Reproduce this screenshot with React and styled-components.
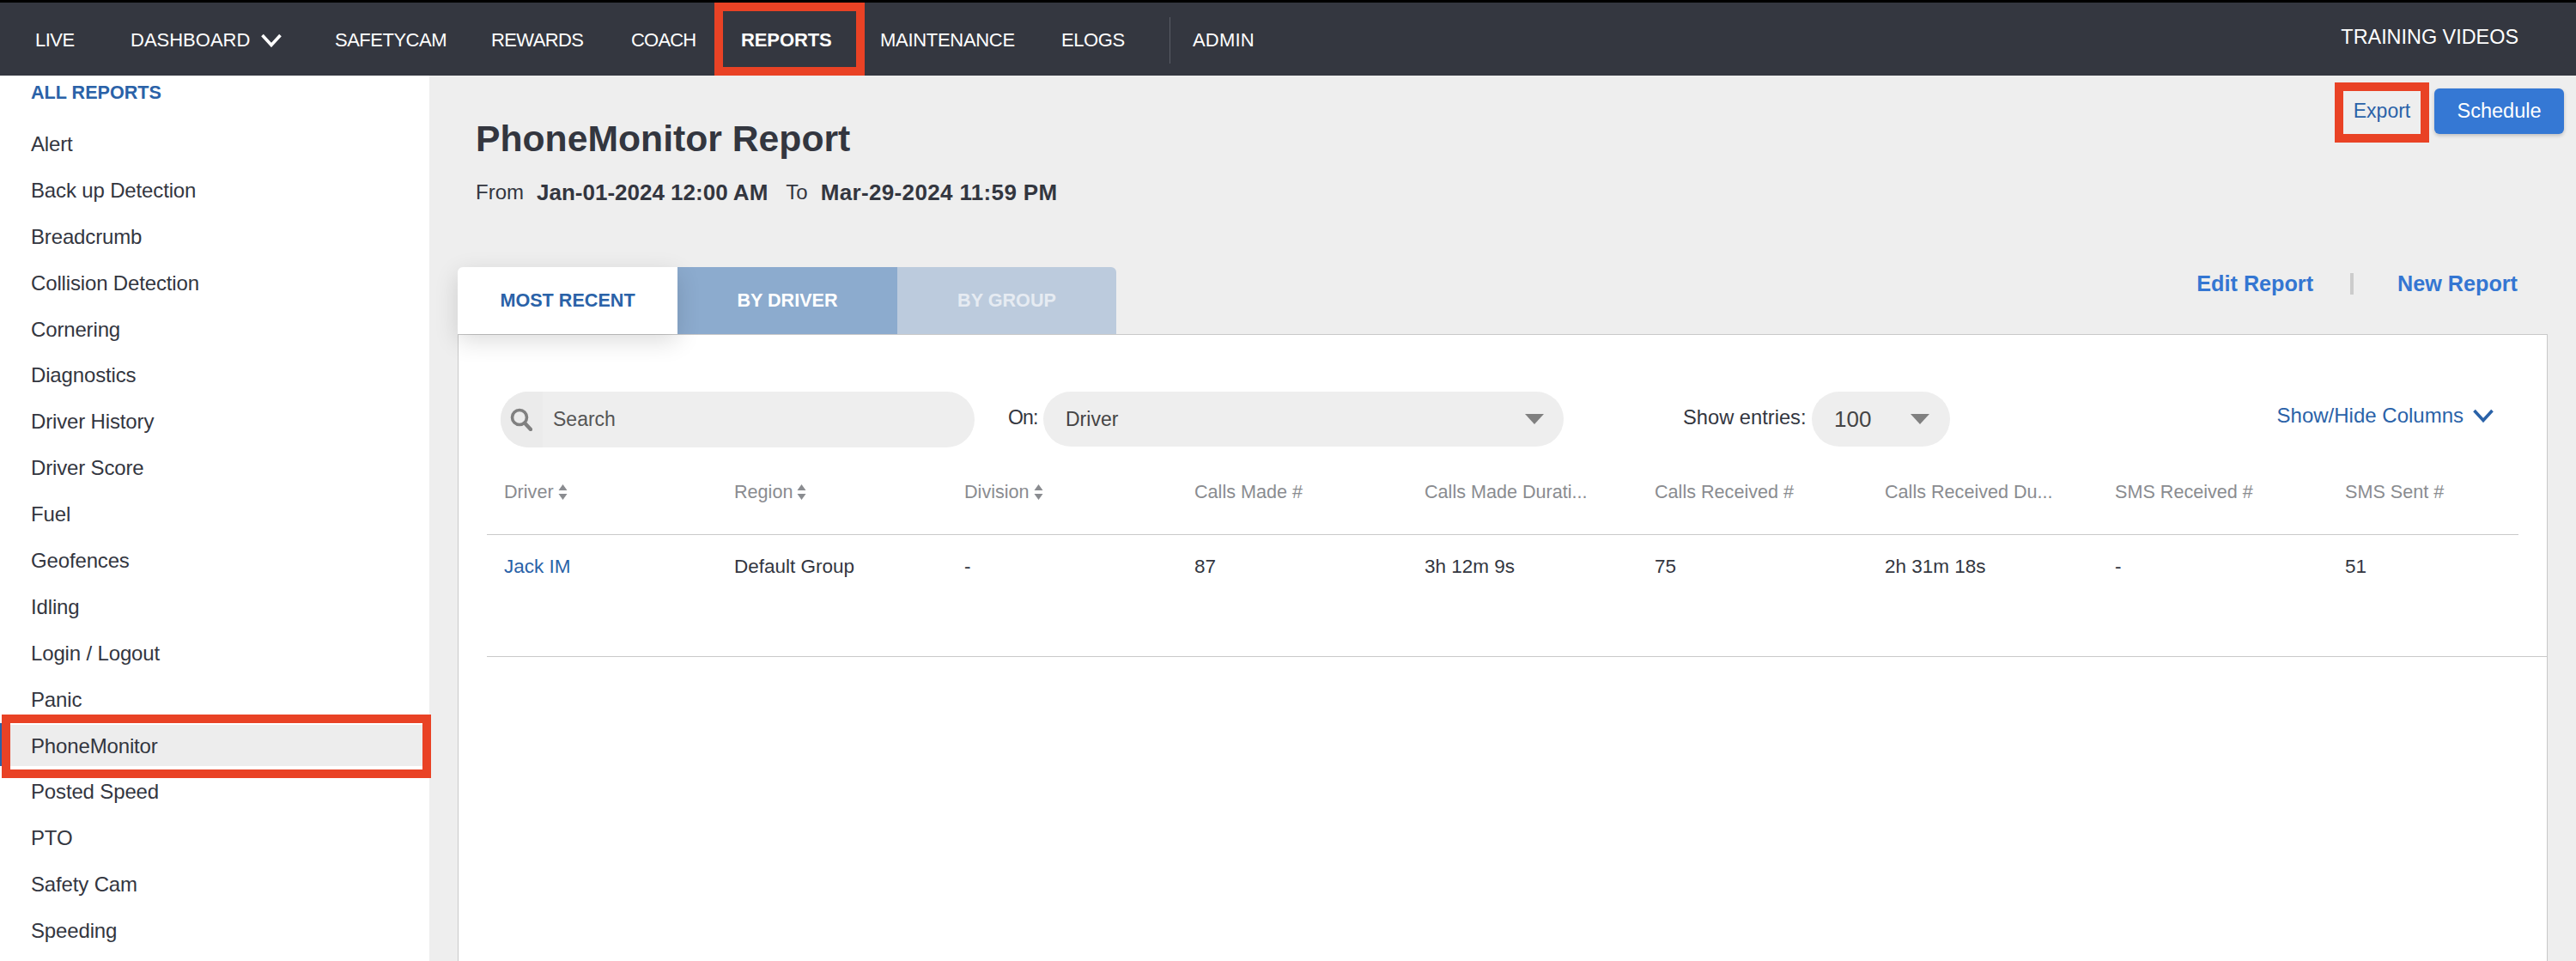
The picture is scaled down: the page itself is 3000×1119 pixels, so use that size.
import React from "react";
import styled, { createGlobalStyle } from "styled-components";

const Global = createGlobalStyle`
  html, body { margin: 0; padding: 0; background: #eeeeee; }
  body { font-family: "Liberation Sans", Arial, sans-serif; color: #33363f; }
  * { box-sizing: border-box; }
`;

const Page = styled.div`
  position: relative;
  width: 3000px;
  height: 1119px;
  overflow: hidden;
  display: flex;
  flex-direction: column;
`;

const Nav = styled.nav`
  flex: none;
  height: 88px;
  border-top: 3px solid #000;
  background: #343740;
  display: flex;
  align-items: center;
  padding: 2px 67px 0 41px;
  color: #fff;
`;
const NavItem = styled.a`
  flex: none;
  width: ${(p) => p.$w}px;
  display: flex;
  align-items: center;
  gap: 12px;
  font-size: 22px;
  letter-spacing: ${(p) => p.$ls ?? -0.5}px;
  font-weight: ${(p) => (p.$bold ? 700 : 400)};
  white-space: nowrap;
`;
const NavDivider = styled.span`
  flex: none;
  width: 1px;
  height: 54px;
  background: #5a5d66;
  margin-right: 26px;
`;
const NavRight = styled.a`
  margin-left: auto;
  margin-bottom: 6px;
  font-size: 23.4px;
  white-space: nowrap;
`;

const Body = styled.div`
  flex: 1;
  display: flex;
  min-height: 0;
`;

const Sidebar = styled.aside`
  flex: none;
  width: 500px;
  background: #fff;
  padding-top: 6px;
`;
const SideHead = styled.div`
  height: 28px;
  margin-bottom: 19px;
  padding-left: 36px;
  font-size: 21.6px;
  line-height: 28px;
  font-weight: 700;
  color: #2a62a8;
`;
const SideItem = styled.div`
  position: relative;
  height: 53.9px;
  padding-left: 36px;
  display: flex;
  align-items: center;
  font-size: 24px;
  letter-spacing: -0.15px;
  color: #33363f;
  ${(p) =>
    p.$active &&
    `
    &::before { content: ""; position: absolute; left: 12px; right: 8px; top: 2px; bottom: 3px; background: #ededed; }
    &::after { content: ""; position: absolute; left: 0; width: 2px; top: 0; bottom: 3px; background: #2a62a8; }
  `}
`;
const SideLabel = styled.span`
  position: relative;
  z-index: 1;
`;

const Main = styled.main`
  flex: 1;
  min-width: 0;
  display: flex;
  flex-direction: column;
  background: #eeeeee;
  padding-left: 33px;
  padding-right: 33px;
`;
const Top = styled.div`
  flex: none;
  height: 223px;
  display: flex;
  justify-content: space-between;
  margin-right: -19px;
`;
const Heading = styled.div`
  padding: 48px 0 0 21px;
`;
const Title = styled.h1`
  margin: 0;
  font-size: 42.7px;
  line-height: 50px;
  font-weight: 700;
  color: #33363f;
`;
const Range = styled.div`
  margin-top: 23px;
  display: flex;
  align-items: center;
  font-size: 24px;
  line-height: 30px;
`;
const RangeValue = styled.b`
  font-size: 26px;
  letter-spacing: ${(p) => p.$ls || 0}px;
  margin: 0 21px 0 15px;
`;
const Actions = styled.div`
  padding-top: 15px;
  display: flex;
  align-items: flex-start;
`;
const ExportBtn = styled.a`
  height: 53px;
  width: 90px;
  margin-right: 16px;
  display: flex;
  align-items: center;
  justify-content: center;
  font-size: 23px;
  color: #2a62a8;
`;
const ScheduleBtn = styled.a`
  height: 53px;
  width: 151px;
  display: flex;
  align-items: center;
  justify-content: center;
  border-radius: 6px;
  background: #3578d4;
  color: #fff;
  font-size: 23.5px;
  box-shadow: 0 2px 4px rgba(0, 0, 0, 0.2);
`;

const TabRow = styled.div`
  flex: none;
  height: 78px;
  display: flex;
  justify-content: space-between;
`;
const Tabs = styled.div`
  display: flex;
`;
const Tab = styled.div`
  position: relative;
  width: ${(p) => p.$w}px;
  display: flex;
  align-items: center;
  justify-content: center;
  font-size: 21.6px;
  font-weight: 700;
  background: ${(p) => p.$bg};
  color: ${(p) => p.$fg};
  border-radius: ${(p) => p.$radius};
  ${(p) => p.$active && `box-shadow: 0 8px 28px rgba(0,0,0,0.14); z-index: 1;`}
`;
const ReportLinks = styled.div`
  display: flex;
  align-items: center;
  height: 38px;
  margin: 0 35px 0 0;
  font-size: 25.2px;
  font-weight: 700;
  color: #3476d2;
`;
const LinkSep = styled.span`
  width: 4px;
  height: 25px;
  margin: 0 51px 0 43px;
  background: #cccccc;
`;

const Panel = styled.section`
  flex: 1;
  background: #fff;
  border: 1px solid #c9c9c9;
  border-bottom: 0;
  min-height: 0;
  position: relative;
`;
const Toolbar = styled.div`
  height: 65px;
  margin-top: 66px;
  padding: 0 61px 0 49px;
  display: flex;
  align-items: flex-start;
`;
const Search = styled.div`
  width: 552px;
  height: 65px;
  border-radius: 33px;
  background: #eeeeee;
  display: flex;
  align-items: center;
  overflow: hidden;
`;
const SearchIconBox = styled.div`
  width: 49px;
  height: 100%;
  display: flex;
  align-items: center;
  padding-left: 11px;
  background: #ebebeb;
`;
const SearchText = styled.span`
  margin-left: 12px;
  font-size: 23px;
  color: #555;
`;
const FieldLabel = styled.span`
  width: ${(p) => p.$w}px;
  flex: none;
  height: 60px;
  display: flex;
  align-items: center;
  white-space: nowrap;
  font-size: ${(p) => p.$size}px;
  letter-spacing: ${(p) => p.$ls || 0}px;
  margin-left: ${(p) => p.$ml}px;
  margin-right: ${(p) => p.$mr}px;
  color: #33363f;
`;
const Select = styled.div`
  position: relative;
  width: ${(p) => p.$w}px;
  height: 64px;
  flex: none;
  border-radius: 32px;
  background: #eeeeee;
  display: flex;
  align-items: center;
  padding-left: ${(p) => p.$pl}px;
  font-size: ${(p) => p.$size}px;
  color: #444;
`;
const Caret = styled.span`
  position: absolute;
  right: ${(p) => p.$r}px;
  top: 26px;
  width: 0;
  height: 0;
  border-left: 11px solid transparent;
  border-right: 11px solid transparent;
  border-top: 12px solid #808080;
`;
const ColumnsToggle = styled.a`
  margin-left: auto;
  height: 56px;
  display: flex;
  align-items: center;
  gap: 10px;
  font-size: 24px;
  color: #2a62a8;
`;

const Grid = styled.div`
  display: grid;
  grid-template-columns: repeat(8, 268px) 1fr;
  padding-left: 20px;
  margin-left: 33px;
  ${(p) => (p.$head ? `height: 102px; margin-right: 33px; align-items: center; padding-top: 2px;` : `height: 142px; padding-top: 24px;`)}
  border-bottom: 1px solid #c9c9c9;
`;
const HeadCell = styled.div`
  display: flex;
  align-items: center;
  gap: 5px;
  font-size: 21.6px;
  color: #8a8c90;
  white-space: nowrap;
`;
const Cell = styled.div`
  font-size: 22.5px;
  line-height: 26px;
  color: ${(p) => (p.$link ? "#2a62a8" : "#33363f")};
`;

const Annotation = styled.div`
  position: absolute;
  left: ${(p) => p.$x}px;
  top: ${(p) => p.$y}px;
  width: ${(p) => p.$w}px;
  height: ${(p) => p.$h}px;
  border: 10px solid #e94225;
  pointer-events: none;
`;

const Chevron = ({ w = 26, h = 16, color = "#fff" }) => (
  <svg width={w} height={h} viewBox="0 0 26 16" fill="none">
    <path d="M2.5 2 L13 13.5 L23.5 2" stroke={color} strokeWidth="3.6" />
  </svg>
);
const SortIcon = () => (
  <svg width="11" height="20" viewBox="0 0 11 20">
    <path d="M5.5 1 L10.5 8 H0.5 Z M5.5 19 L0.5 12 H10.5 Z" fill="#8a8c90" />
  </svg>
);
const SearchIcon = () => (
  <svg width="26" height="27" viewBox="0 0 26 27" fill="none">
    <circle cx="11" cy="11" r="8.5" stroke="#808080" strokeWidth="3.6" />
    <path d="M17 17.5 L24 25" stroke="#808080" strokeWidth="4.4" strokeLinecap="round" />
  </svg>
);

const navItems = [
  { label: "LIVE", w: 111 },
  { label: "DASHBOARD", w: 238, chevron: true, ls: 0 },
  { label: "SAFETYCAM", w: 182 },
  { label: "REWARDS", w: 163, ls: -0.6 },
  { label: "COACH", w: 128, ls: -0.8 },
  { label: "REPORTS", w: 162, bold: true, ls: -0.1 },
  { label: "MAINTENANCE", w: 211, ls: -0.3 },
  { label: "ELOGS", w: 126, ls: -0.4 },
];
const reports = [
  "Alert", "Back up Detection", "Breadcrumb", "Collision Detection", "Cornering", "Diagnostics",
  "Driver History", "Driver Score", "Fuel", "Geofences", "Idling", "Login / Logout", "Panic",
  "PhoneMonitor", "Posted Speed", "PTO", "Safety Cam", "Speeding",
];
const columns = [
  { t: "Driver", sort: true }, { t: "Region", sort: true }, { t: "Division", sort: true },
  { t: "Calls Made #" }, { t: "Calls Made Durati..." }, { t: "Calls Received #" },
  { t: "Calls Received Du..." }, { t: "SMS Received #" }, { t: "SMS Sent #" },
];
const row = ["Jack IM", "Default Group", "-", "87", "3h 12m 9s", "75", "2h 31m 18s", "-", "51"];

export default function App() {
  return (
    <Page>
      <Global />
      <Nav>
        {navItems.map((n) => (
          <NavItem key={n.label} $w={n.w} $bold={n.bold} $ls={n.ls}>
            {n.label}
            {n.chevron && <Chevron />}
          </NavItem>
        ))}
        <NavDivider />
        <NavItem $w={90} $ls={0.2}>ADMIN</NavItem>
        <NavRight>TRAINING VIDEOS</NavRight>
      </Nav>
      <Body>
        <Sidebar>
          <SideHead>ALL REPORTS</SideHead>
          {reports.map((r) => (
            <SideItem key={r} $active={r === "PhoneMonitor"}>
              <SideLabel>{r}</SideLabel>
            </SideItem>
          ))}
        </Sidebar>
        <Main>
          <Top>
            <Heading>
              <Title>PhoneMonitor Report</Title>
              <Range>
                From<RangeValue>Jan-01-2024 12:00 AM</RangeValue>To<RangeValue $ls={0.35}>Mar-29-2024 11:59 PM</RangeValue>
              </Range>
            </Heading>
            <Actions>
              <ExportBtn>Export</ExportBtn>
              <ScheduleBtn>Schedule</ScheduleBtn>
            </Actions>
          </Top>
          <TabRow>
            <Tabs>
              <Tab $active $w={256} $bg="#fff" $fg="#2a62a8" $radius="6px 0 0 0">MOST RECENT</Tab>
              <Tab $w={256} $bg="#8cabce" $fg="#fff">BY DRIVER</Tab>
              <Tab $w={255} $bg="#bccbdd" $fg="#e6ebf2" $radius="0 6px 0 0">BY GROUP</Tab>
            </Tabs>
            <ReportLinks>
              Edit Report<LinkSep />New Report
            </ReportLinks>
          </TabRow>
          <Panel>
            <Toolbar>
              <Search>
                <SearchIconBox><SearchIcon /></SearchIconBox>
                <SearchText>Search</SearchText>
              </Search>
              <FieldLabel $w={34} $size={23} $ls={-0.8} $ml={39} $mr={7}>On:</FieldLabel>
              <Select $w={606} $pl={26} $size={23}>Driver<Caret $r={23} /></Select>
              <FieldLabel $w={143} $size={23.7} $ml={139} $mr={7}>Show entries:</FieldLabel>
              <Select $w={161} $pl={26} $size={26}>100<Caret $r={24} /></Select>
              <ColumnsToggle>Show/Hide Columns<Chevron color="#2a62a8" /></ColumnsToggle>
            </Toolbar>
            <Grid $head>
              {columns.map((c) => (
                <HeadCell key={c.t}>{c.t}{c.sort && <SortIcon />}</HeadCell>
              ))}
            </Grid>
            <Grid>
              {row.map((v, i) => (
                <Cell key={i} $link={i === 0}>{v}</Cell>
              ))}
            </Grid>
          </Panel>
        </Main>
      </Body>
      <Annotation $x={832} $y={3} $w={175} $h={85} />
      <Annotation $x={2} $y={832} $w={500} $h={74} />
      <Annotation $x={2719} $y={96} $w={110} $h={70} />
    </Page>
  );
}
